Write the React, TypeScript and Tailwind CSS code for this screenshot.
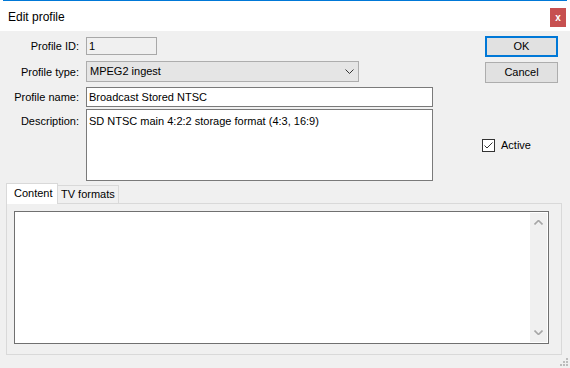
import React from 'react';

const font = { fontFamily: '"Liberation Sans", Arial, sans-serif' };

function Field({ label, children, className, labelClass }: { label: string; children: React.ReactNode; className?: string; labelClass?: string }) {
  return (
    <div className={`flex ${className ?? ''}`}>
      <span className={`w-[79px] shrink-0 text-right ${labelClass ?? 'leading-[18px]'}`}>{label}</span>
      <div className="ml-[7px]">{children}</div>
    </div>
  );
}

function Chevron({ dir, className }: { dir: 'up' | 'down'; className?: string }) {
  return (
    <svg width="9" height="5" viewBox="0 0 9 5" className={className}>
      {dir === 'down' ? (
        <path d="M0.5 0.5 L4.5 4.5 L8.5 0.5" fill="none" stroke="currentColor" strokeWidth="1" />
      ) : (
        <path d="M0.5 4.5 L4.5 0.5 L8.5 4.5" fill="none" stroke="currentColor" strokeWidth="1.6" />
      )}
    </svg>
  );
}

export default function App() {
  return (
    <div className="w-[570px] h-[368px] bg-[#f0f0f0] flex flex-col text-[11px] text-black overflow-hidden" style={font}>
      {/* Title bar */}
      <div className="bg-white h-[31px] shrink-0 flex flex-col">
        <div className="mx-[3px] h-px bg-[#0078d7]" />
        <div className="flex items-start">
          <span className="ml-[8px] mt-[8px] text-[12px] leading-[16px]">Edit profile</span>
          <div className="ml-auto mr-[4px] mt-[7px] w-[16px] h-[19px] bg-[#c75050] flex items-center justify-center text-white text-[10px] font-bold leading-none">
            x
          </div>
        </div>
      </div>

      {/* Form */}
      <div className="flex shrink-0">
        <div className="pt-[6px] w-[433px] flex flex-col">
          <Field label="Profile ID:" labelClass="pt-px leading-[17px]">
            <div className="w-[71px] h-[18px] border border-[#a8a8a8] bg-[#f0f0f0] pl-[2px] leading-[17px]">1</div>
          </Field>
          <Field label="Profile type:" className="mt-[6px] items-center">
            <div className="w-[273px] h-[21px] border border-[#adadad] bg-[#e5e5e5] flex items-center pl-[3px] pr-[4px]">
              <span>MPEG2 ingest</span>
              <Chevron dir="down" className="ml-auto text-[#333]" />
            </div>
          </Field>
          <Field label="Profile name:" className="mt-[5px] items-center">
            <div className="w-[347px] h-[20px] border border-[#7a7a7a] bg-white pl-[2px] leading-[18px]">Broadcast Stored NTSC</div>
          </Field>
          <Field label="Description:" className="mt-[2px]" labelClass="pt-[3px] leading-[18px]">
            <div className="w-[347px] h-[72px] border border-[#7a7a7a] bg-white pl-[2px] pt-[2px] leading-[18px]">
              SD NTSC main 4:2:2 storage format (4:3, 16:9)
            </div>
          </Field>
        </div>

        <div className="ml-[52px] pt-[5px] flex flex-col">
          <button className="w-[73px] h-[21px] border-2 border-[#0078d7] bg-[#e1e1e1] leading-none">OK</button>
          <button className="mt-[5px] w-[73px] h-[21px] border border-[#adadad] bg-[#e1e1e1] leading-none">Cancel</button>
          <div className="mt-[55px] -ml-[3px] flex items-center">
            <div className="w-[13px] h-[13px] border border-[#333] bg-white flex items-center justify-center">
              <svg width="11" height="11" viewBox="0 0 11 11">
                <path d="M1.5 5.5 L4 8 L9.5 2.5" fill="none" stroke="#333" strokeWidth="1" />
              </svg>
            </div>
            <span className="ml-[6px] leading-[14px]">Active</span>
          </div>
        </div>
      </div>

      {/* Tabs */}
      <div className="mt-[2px] ml-[6px] flex items-end h-[20px] shrink-0 relative z-10">
        <div className="w-[52px] h-[21px] border border-b-0 border-[#d9d9d9] bg-white pl-[7px] leading-[19px] -mb-px whitespace-nowrap">Content</div>
        <div className="h-[18px] border border-l-0 border-b-0 border-[#d9d9d9] bg-[#f0f0f0] px-[3px] leading-[17px] whitespace-nowrap">TV formats</div>
      </div>
      <div className="ml-[6px] w-[556px] h-[152px] border border-[#d9d9d9] shrink-0 pt-[7px] pl-[7px]">
        <div className="w-[535px] h-[133px] border border-[#707070] bg-white flex p-px">
          <div className="flex-1" />
          <div className="w-[17px] bg-[#f0f0f0] flex flex-col items-center justify-between py-[7px] text-[#a6a6a6]">
            <Chevron dir="up" />
            <Chevron dir="down" className="[&>path]:stroke-[1.6]" />
          </div>
        </div>
      </div>

      {/* Size grip */}
      <div className="flex justify-end pr-[2px] pt-[3px]">
        <svg width="8" height="8" viewBox="0 0 8 8">
          <rect x="6" y="0" width="2" height="2" fill="#bcbcbc" />
          <rect x="3" y="3" width="2" height="2" fill="#bcbcbc" />
          <rect x="6" y="3" width="2" height="2" fill="#bcbcbc" />
          <rect x="0" y="6" width="2" height="2" fill="#bcbcbc" />
          <rect x="3" y="6" width="2" height="2" fill="#bcbcbc" />
          <rect x="6" y="6" width="2" height="2" fill="#bcbcbc" />
        </svg>
      </div>
    </div>
  );
}
